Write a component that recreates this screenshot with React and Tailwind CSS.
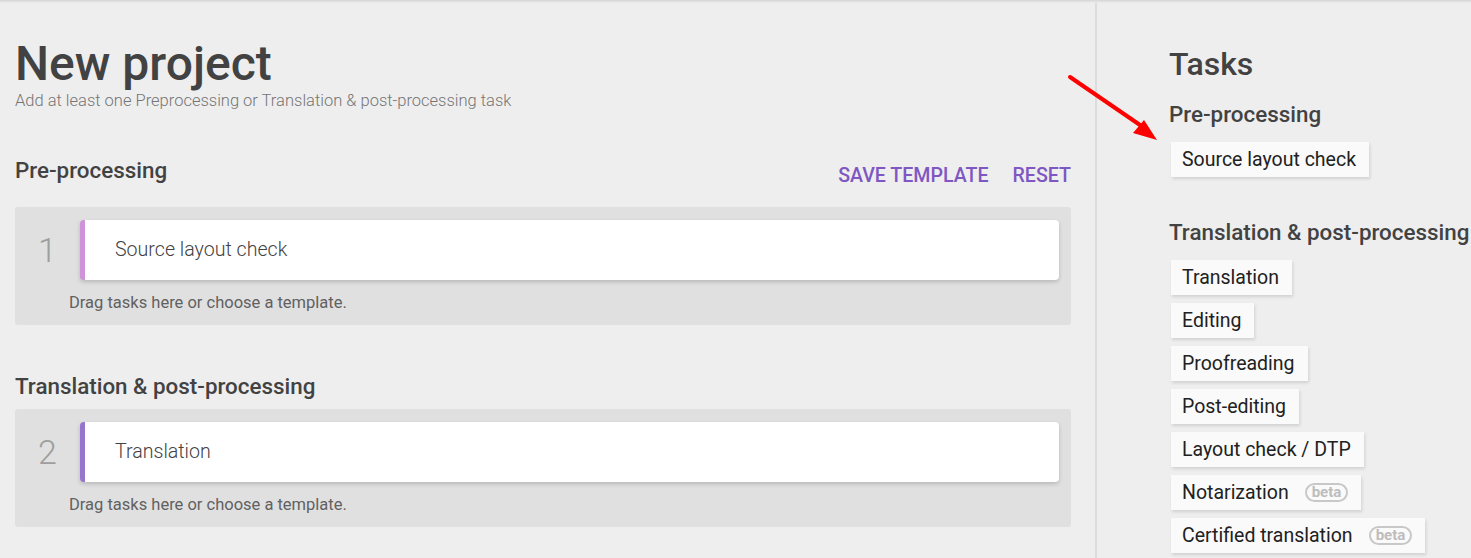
import React from 'react';

const font = { fontFamily: 'Roboto, "Noto Sans", sans-serif' };

const TaskGroup = ({ index, title, accent }) => (
  <div className="rounded-[3px] bg-[#e0e0e0] pt-[13px] pr-[12px] pb-[10px]">
    <div className="flex items-center">
      <div className="w-[65px] text-center text-[34px] font-light leading-[40px] text-[#9e9e9e]">{index}</div>
      <div className={`flex h-[60px] flex-1 items-center rounded-[4px] border-l-[5px] ${accent} bg-white pl-[30px] shadow-[0_2px_4px_rgba(0,0,0,0.18)]`}>
        <span className="text-[19.6px] font-light text-[#424242]">{title}</span>
      </div>
    </div>
    <p className="mt-[11px] pl-[54px] text-[16.5px] leading-[24px] text-[#616161]">Drag tasks here or choose a template.</p>
  </div>
);

const Chip = ({ label, beta }) => (
  <div className="flex h-[35px] w-fit items-center bg-[#fafafa] pl-[11px] pr-[13px] text-[19.5px] leading-[35px] text-[#212121] shadow-[1px_2px_3px_rgba(0,0,0,0.12)]">
    <span>{label}</span>
    {beta && (
      <span className="ml-[16px] flex h-[19px] items-center rounded-full border-2 border-[#c8c8c8] px-[5px] text-[15px] font-bold leading-none text-[#bdbdbd]">
        beta
      </span>
    )}
  </div>
);

export default function App() {
  return (
    <div className="relative h-[558px] w-[1471px] overflow-hidden bg-[#eeeeee]" style={font}>
      <div className="absolute inset-x-0 top-0 h-[3px] bg-gradient-to-b from-[#d4d4d4] to-[#eeeeee]" />

      <div className="flex h-full">
        {/* main column */}
        <div className="w-[1095px] shrink-0 pl-[15px] pr-[24px] pt-[39px]">
          <h1 className="text-[48px] font-medium leading-[50px] text-[#424242]">New project</h1>
          <p className="mt-[2px] text-[16.5px] font-light leading-[20px] text-[#757575]">
            Add at least one Preprocessing or Translation &amp; post-processing task
          </p>

          <div className="mt-[45px] flex items-start justify-between">
            <h2 className="text-[22.4px] font-medium leading-[28px] text-[#424242]">Pre-processing</h2>
            <div className="mt-[8px] flex gap-[24px] text-[19.6px] font-medium leading-[24px] text-[#7e57c2]">
              <button>SAVE TEMPLATE</button>
              <button>RESET</button>
            </div>
          </div>
          <div className="mt-[19px]">
            <TaskGroup index="1" title="Source layout check" accent="border-[#ce93d8]" />
          </div>

          <h2 className="mt-[47px] text-[22.4px] font-medium leading-[28px] text-[#424242]">Translation &amp; post-processing</h2>
          <div className="mt-[9px]">
            <TaskGroup index="2" title="Translation" accent="border-[#9575cd]" />
          </div>
        </div>

        {/* tasks sidebar */}
        <div className="flex-1 overflow-hidden whitespace-nowrap border-l-2 border-[#dcdcdc] pl-[72px] pt-[44px]">
          <h2 className="text-[32px] font-medium leading-[40px] text-[#424242]">Tasks</h2>
          <h3 className="mt-[16px] text-[22.4px] font-medium leading-[28px] text-[#424242]">Pre-processing</h3>
          <div className="mt-[14px] pl-[2px]">
            <Chip label="Source layout check" />
          </div>
          <h3 className="mt-[41px] text-[22.4px] font-medium leading-[28px] text-[#424242]">Translation &amp; post-processing</h3>
          <div className="mt-[14px] flex flex-col gap-[8px] pl-[2px]">
            <Chip label="Translation" />
            <Chip label="Editing" />
            <Chip label="Proofreading" />
            <Chip label="Post-editing" />
            <Chip label="Layout check / DTP" />
            <Chip label="Notarization" beta />
            <Chip label="Certified translation" beta />
          </div>
        </div>
      </div>

      {/* annotation arrow */}
      <svg className="pointer-events-none absolute left-[1060px] top-[68px]" width="110" height="80" viewBox="0 0 110 80">
        <line x1="10" y1="9" x2="80" y2="57" stroke="#ff0000" strokeWidth="4" strokeLinecap="round" />
        <polygon points="97,72 73,65 84,52" fill="#ff0000" />
      </svg>
    </div>
  );
}
